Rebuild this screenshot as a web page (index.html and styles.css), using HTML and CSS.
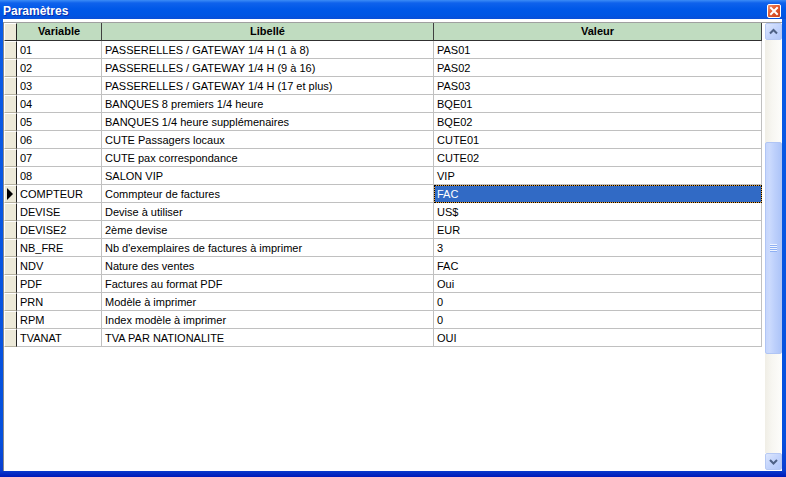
FILE: index.html
```html
<!DOCTYPE html>
<html lang="fr">
<head>
    <meta charset="UTF-8">
    <title>Paramètres</title>
    <link rel="stylesheet" href="styles.css">
</head>
<body>
    <div class="window">
        <div class="titlebar">
            <span class="title">Paramètres</span>
            <div class="close-btn">
                <svg width="14" height="14" viewBox="0 0 14 14">
                    <path d="M4 4 L10 10 M10 4 L4 10" stroke="#fff" stroke-width="2" stroke-linecap="square"/>
                </svg>
            </div>
        </div>

        <div class="client">
            <div class="gridview">
                <div class="grid">
                    <div class="row head">
                        <div class="cell ind"></div>
                        <div class="cell">Variable</div>
                        <div class="cell">Libellé</div>
                        <div class="cell">Valeur</div>
                    </div>
                    <div class="row"><div class="cell ind"></div><div class="cell">01</div><div class="cell">PASSERELLES / GATEWAY 1/4 H (1 à 8)</div><div class="cell">PAS01</div></div>
                    <div class="row"><div class="cell ind"></div><div class="cell">02</div><div class="cell">PASSERELLES / GATEWAY 1/4 H (9 à 16)</div><div class="cell">PAS02</div></div>
                    <div class="row"><div class="cell ind"></div><div class="cell">03</div><div class="cell">PASSERELLES / GATEWAY 1/4 H (17 et plus)</div><div class="cell">PAS03</div></div>
                    <div class="row"><div class="cell ind"></div><div class="cell">04</div><div class="cell">BANQUES 8 premiers 1/4 heure</div><div class="cell">BQE01</div></div>
                    <div class="row"><div class="cell ind"></div><div class="cell">05</div><div class="cell">BANQUES 1/4 heure supplémenaires</div><div class="cell">BQE02</div></div>
                    <div class="row"><div class="cell ind"></div><div class="cell">06</div><div class="cell">CUTE Passagers locaux</div><div class="cell">CUTE01</div></div>
                    <div class="row"><div class="cell ind"></div><div class="cell">07</div><div class="cell">CUTE pax correspondance</div><div class="cell">CUTE02</div></div>
                    <div class="row"><div class="cell ind"></div><div class="cell">08</div><div class="cell">SALON VIP</div><div class="cell">VIP</div></div>
                    <div class="row current"><div class="cell ind"><span class="arrow"></span></div><div class="cell">COMPTEUR</div><div class="cell">Commpteur de factures</div><div class="cell selected">FAC</div></div>
                    <div class="row"><div class="cell ind"></div><div class="cell">DEVISE</div><div class="cell">Devise à utiliser</div><div class="cell">US$</div></div>
                    <div class="row"><div class="cell ind"></div><div class="cell">DEVISE2</div><div class="cell">2ème devise</div><div class="cell">EUR</div></div>
                    <div class="row"><div class="cell ind"></div><div class="cell">NB_FRE</div><div class="cell">Nb d'exemplaires de factures à imprimer</div><div class="cell">3</div></div>
                    <div class="row"><div class="cell ind"></div><div class="cell">NDV</div><div class="cell">Nature des ventes</div><div class="cell">FAC</div></div>
                    <div class="row"><div class="cell ind"></div><div class="cell">PDF</div><div class="cell">Factures au format PDF</div><div class="cell">Oui</div></div>
                    <div class="row"><div class="cell ind"></div><div class="cell">PRN</div><div class="cell">Modèle à imprimer</div><div class="cell">0</div></div>
                    <div class="row"><div class="cell ind"></div><div class="cell">RPM</div><div class="cell">Index modèle à imprimer</div><div class="cell">0</div></div>
                    <div class="row"><div class="cell ind"></div><div class="cell">TVANAT</div><div class="cell">TVA PAR NATIONALITE</div><div class="cell">OUI</div></div>
                </div>

                <div class="vscroll">
                    <div class="sb-btn">
                        <svg width="17" height="17" viewBox="0 0 17 17"><polyline points="5,10.5 8.5,7 12,10.5" fill="none" stroke="#4d6185" stroke-width="2"/></svg>
                    </div>
                    <div class="sb-track">
                        <div class="sb-thumb">
                            <div class="grip"></div>
                        </div>
                    </div>
                    <div class="sb-btn">
                        <svg width="17" height="17" viewBox="0 0 17 17"><polyline points="5,7 8.5,10.5 12,7" fill="none" stroke="#4d6185" stroke-width="2"/></svg>
                    </div>
                </div>
            </div>
        </div>
    </div>
</body>
</html>
```

FILE: styles.css
```css
* {
    margin: 0;
    padding: 0;
    box-sizing: border-box;
}

body {
    font-family: 'Liberation Sans', Arial, sans-serif;
    font-size: 11px;
    background: #fff;
}

.window {
    width: 786px;
    height: 477px;
    display: flex;
    flex-direction: column;
    background: linear-gradient(to bottom, #0a5ce6 0, #0550dd 440px, #0a3fd0 470px, #0019b8 477px);
}

/* barre de titre */
.titlebar {
    height: 19px;
    display: flex;
    justify-content: space-between;
    background: linear-gradient(to bottom, #3c8cf6 0, #0f62ec 3px, #0058e8 9px, #0056e4 15px, #0a4fd8 19px);
}

.title {
    color: #fff;
    font-weight: bold;
    font-size: 12px;
    line-height: 16px;
    padding: 3px 0 0 3px;
    text-shadow: 1px 1px 0 #0d2aa8;
}

.close-btn {
    width: 14px;
    height: 14px;
    margin: 4px 5px 0 0;
    border: 1px solid #fff;
    border-radius: 2px;
    background: linear-gradient(135deg, #f0906a 0, #e2592f 45%, #c8401c 100%);
}

.close-btn svg {
    display: block;
    margin: -1px 0 0 -1px;
}

/* zone cliente */
.client {
    flex: 1;
    margin: 0 4px 6px 3px;
    padding-top: 3px;
    background: #fff;
}

.gridview {
    height: 100%;
    display: flex;
    border-top: 1px solid #a0a0a0;
    border-left: 1px solid #8a8a8a;
}

.grid {
    flex: 1;
}

.row {
    display: grid;
    grid-template-columns: 13px 85px 332px 328px;
    height: 18px;
}

.cell {
    height: 18px;
    padding: 2px 0 0 3px;
    line-height: 15px;
    white-space: nowrap;
    overflow: hidden;
    border-right: 1px solid #c0c0c0;
    border-bottom: 1px solid #c0c0c0;
    color: #000;
}

.cell.ind {
    padding: 0;
    background: #ece9d8;
    border-top: 1px solid #fff;
    border-left: 1px solid #fff;
    border-right: 1px solid #222;
    border-bottom: 1px solid #b5b1a0;
    display: flex;
    align-items: center;
}

.row.head .cell {
    padding: 1px 0 0 0;
    text-align: center;
    font-weight: bold;
    background: #c0dcc0;
    border-right: 1px solid #404040;
    border-bottom: 1px solid #303030;
}

.row.head .cell.ind {
    background: #ece9d8;
    border-right: 1px solid #222;
}

.arrow {
    width: 0;
    height: 0;
    margin-left: 2px;
    border-top: 6px solid transparent;
    border-bottom: 6px solid transparent;
    border-left: 6px solid #000;
}

.cell.selected {
    color: #fff;
    padding: 1px 0 0 2px;
    border: 1px dotted #000;
    background: linear-gradient(#316ac5, #316ac5) padding-box, #e8a23c border-box;
}

/* barre de défilement */
.vscroll {
    width: 17px;
    margin: 0 1px 1px 3px;
    display: flex;
    flex-direction: column;
}

.sb-btn {
    height: 17px;
    border: 1px solid #b6c9f4;
    border-radius: 2px;
    background: linear-gradient(135deg, #dde7fd 0, #c3d4fc 50%, #b2c8f8 100%);
}

.sb-btn svg {
    display: block;
    margin: -1px 0 0 -1px;
}

.sb-track {
    flex: 1;
    background: linear-gradient(to right, #f0eee6 0, #f7f6f1 40%, #fdfdfb 100%);
}

.sb-thumb {
    height: 212px;
    margin-top: 102px;
    border: 1px solid #b0c5f5;
    border-radius: 2px;
    background: linear-gradient(to right, #c6d6fc 0, #cbdafd 25%, #bccffb 60%, #aec5f8 100%);
    display: flex;
    align-items: center;
    justify-content: center;
}

.grip {
    width: 7px;
    height: 8px;
    background: repeating-linear-gradient(to bottom, #eef3fe 0, #eef3fe 1px, #8eb0f4 1px, #8eb0f4 2px);
}
```
